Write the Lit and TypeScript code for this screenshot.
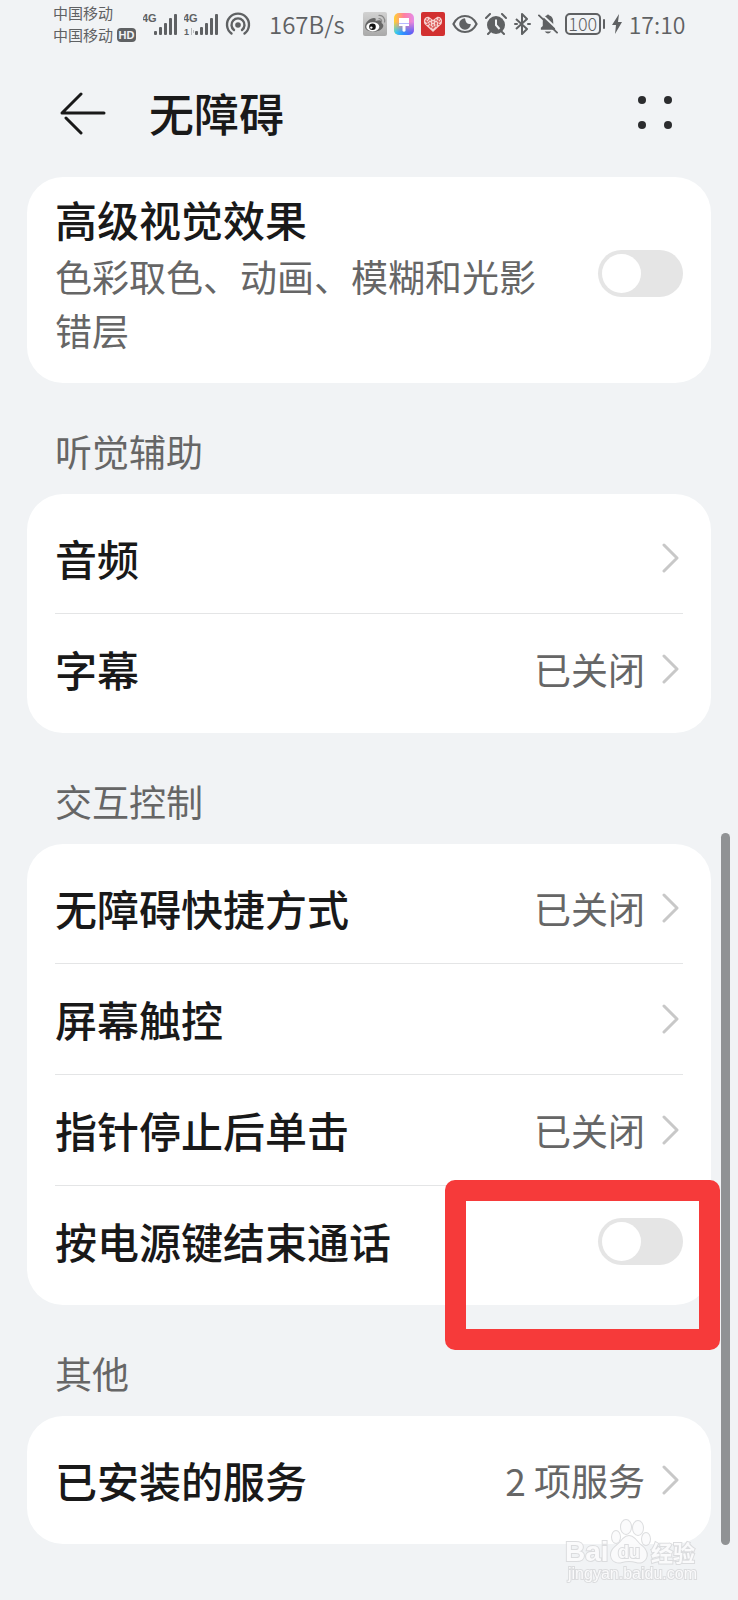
import { LitElement, html, css, svg, nothing } from "lit";
import { customElement, property } from "lit/decorators.js";

const fontStack = css`"Noto Sans CJK SC", "Noto Sans", sans-serif`;

@customElement("status-bar")
class StatusBar extends LitElement {
  static styles = css`
    :host {
      display: block;
      color: #5f6163;
      font-family: ${fontStack};
    }
    .bar {
      display: flex;
      align-items: center;
      gap: 7px;
      height: 48px;
      padding: 0 53px;
    }
    svg {
      display: block;
      flex: none;
    }
    .carriers {
      font-size: 15px;
      line-height: 22px;
      white-space: nowrap;
    }
    .line {
      display: flex;
      align-items: center;
      gap: 4px;
    }
    .hd {
      width: 19px;
      height: 14px;
      border-radius: 4px;
      background: #5f6163;
      color: #f1f3f5;
      font: 700 11px/14px "Liberation Sans", sans-serif;
      text-align: center;
    }
    .speed,
    .time {
      line-height: 32px;
      font-weight: 350;
      white-space: nowrap;
    }
    .speed {
      margin: 0 11px;
      font-size: 24px;
    }
    .time {
      font-size: 23px;
    }
    .battery {
      display: flex;
      align-items: center;
      gap: 2px;
    }
    .cell {
      box-sizing: border-box;
      width: 36px;
      height: 22px;
      border: 2px solid #5f6163;
      border-radius: 5px;
      font-size: 18px;
      line-height: 17px;
      font-weight: 300;
      text-align: center;
    }
    .cap {
      width: 2px;
      height: 10px;
      border-radius: 1px;
      background: #5f6163;
    }
    .net {
      font: 700 11px "Liberation Sans", sans-serif;
    }
    .slot {
      font: 700 9px "Liberation Sans", sans-serif;
    }
  `;

  private signal(slot: boolean) {
    return svg`<svg width="34" height="24" viewBox="0 0 34 24" fill="currentColor">
      <text class="net" x="-1" y="10">4G</text>
      ${slot ? svg`<text class="slot" x="0" y="23">1</text><path d="M7.500 16v7M9.500 18v3" stroke="#b9bbbd"/>` : nothing}
      <rect x="11" y="19" width="3" height="4" rx="1"/>
      <rect x="16" y="15" width="3" height="8" rx="1"/>
      <rect x="21" y="11" width="3" height="12" rx="1"/>
      <rect x="26" y="6" width="3" height="17" rx="1"/>
      <rect x="31" y="2" width="3" height="21" rx="1"/>
    </svg>`;
  }

  render() {
    return html`<div class="bar">
      <div class="carriers">
        <div class="line">中国移动</div>
        <div class="line">中国移动<span class="hd">HD</span></div>
      </div>
      ${this.signal(false)}${this.signal(true)}
      <svg width="26" height="24" viewBox="0 0 26 24" fill="none" stroke="currentColor" stroke-width="2.400" stroke-linecap="round">
        <circle cx="13" cy="13" r="2.800" fill="currentColor" stroke="none"/>
        <path d="M9 18a6.500 6.500 0 1 1 8 0M6.500 21.500a11 11 0 1 1 13 0"/>
      </svg>
      <span class="speed">167B/s</span>
      <svg width="24" height="24" viewBox="0 0 24 24">
        <defs><linearGradient id="g" x2="0" y2="1"><stop stop-color="#d2d2d2"/><stop offset="1" stop-color="#a9a9a9"/></linearGradient></defs>
        <rect width="24" height="24" rx="2" fill="url(#g)"/>
        <path d="M2 15c0-5 5-9 9-9 2 0 2 1 1.500 3 4-1.500 7-1 6 2 2 1 2.500 3 1 5-3 5-17 5-17.500-1z" fill="#666"/>
        <ellipse cx="9.800" cy="14.800" rx="6.500" ry="4.600" fill="#fff"/>
        <circle cx="9.500" cy="14.800" r="3.300" fill="#111"/><circle cx="8.300" cy="15.600" r="1.200" fill="#fff"/>
        <path d="M15.500 6.500c2.500 0 3.500 1.500 3 3.500M15.500 3.500c4.500-.5 7 3 6 7" fill="none" stroke="#888" stroke-width="1.200"/>
      </svg>
      <svg width="20" height="22" viewBox="0 0 20 22">
        <defs>
          <linearGradient id="a" x2="1"><stop stop-color="#ffd22e"/><stop offset=".5" stop-color="#ff7fa0"/><stop offset="1" stop-color="#e58be8"/></linearGradient>
          <linearGradient id="b" x2="1"><stop stop-color="#32d9f5"/><stop offset=".5" stop-color="#2f8bff"/><stop offset="1" stop-color="#6d55f2"/></linearGradient>
          <linearGradient id="m" x2="0" y2="1"><stop offset=".4" stop-color="#000"/><stop offset=".9" stop-color="#fff"/></linearGradient>
          <mask id="k"><rect width="20" height="22" fill="url(#m)"/></mask>
        </defs>
        <rect width="20" height="22" rx="5" fill="url(#a)"/>
        <rect width="20" height="22" rx="5" fill="url(#b)" mask="url(#k)"/>
        <path d="M5 5h10v8h-3.500v5q-1.500 1.500-3 0v-5H5z" fill="#fff"/><path d="M5 10.500h10" stroke="#b8b8ff"/>
      </svg>
      <svg width="24" height="24" viewBox="0 0 24 24">
        <rect width="24" height="24" rx="2" fill="#d23030"/>
        <path d="M12 20 3.500 12C1.500 7 5 4 8 5l4 3 4-3c3-1 6.500 2 4.500 7z" fill="#f6d0cd"/>
        <path d="M6 6v7M9 7v9M12 9v9M15 7v9M18 6v7M4 9h4M16 9h4M6 12h4M14 12h4M9 15h6" stroke="#d23030" stroke-width="1" stroke-dasharray="2 1"/>
      </svg>
      <svg width="26" height="20" viewBox="0 0 27 20" fill="none" stroke="currentColor" stroke-width="2.200">
        <path d="M1.500 10C7-1 20-1 25.500 10 20 21 7 21 1.500 10z"/>
        <path d="M13.500 4a6 6 0 1 0 6 6q-5 1-6-6z" fill="currentColor" stroke="none"/>
      </svg>
      <svg width="22" height="22" viewBox="0 0 22 22">
        <circle cx="11" cy="12" r="9" fill="currentColor"/>
        <path d="M11 6.500V12l3.500 4" stroke="#f1f3f5" stroke-width="2" fill="none"/>
        <path d="M1 5l4-4M21 5l-4-4M5 19l-2 2M17 19l2 2" stroke="currentColor" stroke-width="2" stroke-linecap="round"/>
      </svg>
      <svg width="17" height="22" viewBox="0 0 17 22" fill="none" stroke="currentColor" stroke-width="2" stroke-linejoin="round">
        <path d="M2 6l11 10-5 5V1l5 5L2 16"/><path d="M1 11h2M14 11h2" stroke-linecap="round"/>
      </svg>
      <svg width="20" height="22" viewBox="0 0 21 22">
        <path d="M3 17V15l2-2V9q0-6 4-7 1.500-2 3 0 4 1 4 7v4l2 2v2zM7 19h7q-3.500 4-7 0z" fill="currentColor"/>
        <path d="M3 0l19 18" stroke="#f1f3f5" stroke-width="2"/>
        <path d="M1 2l19 18" stroke="currentColor" stroke-width="2" stroke-linecap="round"/>
      </svg>
      <span class="battery"><span class="cell">100</span><span class="cap"></span></span>
      <svg width="10" height="20" viewBox="0 0 10 20" fill="currentColor"><path d="M7 0 0 11h4L3 20l7-12H6z"/></svg>
      <span class="time">17:10</span>
    </div>`;
  }
}

@customElement("setting-row")
class SettingRow extends LitElement {
  @property() label = "";
  @property() detail = "";
  @property() value = "";
  @property({ type: Boolean }) toggle = false;
  @property({ type: Boolean }) marked = false;

  static styles = css`
    :host {
      display: block;
      border-bottom: 1px solid #e4e5e6;
      font-family: ${fontStack};
    }
    :host(:last-of-type) {
      border-bottom-color: transparent;
    }
    .row {
      box-sizing: border-box;
      position: relative;
      display: flex;
      align-items: center;
      justify-content: space-between;
      gap: 48px;
      width: 100%;
      min-height: 110px;
      color: #191919;
      text-decoration: none;
    }
    .tall {
      padding: 3px 0 17px;
    }
    .label {
      display: block;
      font-size: 42px;
      line-height: 60px;
      font-weight: 500;
    }
    .detail {
      display: block;
      font-size: 37px;
      line-height: 54px;
      color: #666;
    }
    .end {
      display: flex;
      align-items: center;
      gap: 16px;
      padding-right: 4px;
      font-size: 37px;
      line-height: 54px;
      color: #666;
      white-space: nowrap;
    }
    .chevron {
      display: block;
      width: 18px;
      height: 32px;
    }
    .switch {
      appearance: none;
      flex: none;
      box-sizing: border-box;
      width: 85px;
      height: 47px;
      margin: 0;
      padding: 4px;
      border-radius: 24px;
      background: #e5e5e5;
    }
    .switch::before {
      content: "";
      display: block;
      width: 39px;
      height: 39px;
      border-radius: 50%;
      background: #fff;
    }
    .switch:checked {
      background: #0a59f7;
    }
    .switch:checked::before {
      margin-left: auto;
    }
    .mark {
      position: absolute;
      top: -6px;
      right: -37px;
      width: 275px;
      height: 170px;
      pointer-events: none;
    }
  `;

  render() {
    const text = html`<span>
      <span class="label">${this.label}</span>
      ${this.detail ? html`<span class="detail">${this.detail}</span>` : nothing}
    </span>`;
    if (this.toggle) {
      return html`<label class="row ${this.detail ? "tall" : ""}">
        ${text}<input class="switch" type="checkbox" role="switch" />
        ${this.marked
          ? html`<svg class="mark" viewBox="0 0 275 170" aria-hidden="true">
              <path fill="#f63a3a" fill-rule="evenodd" d="M10 0H265a10 10 0 0 1 10 10V160a10 10 0 0 1-10 10H10a10 10 0 0 1-10-10V10A10 10 0 0 1 10 0zM21 21V149H254V21z"/>
            </svg>`
          : nothing}
      </label>`;
    }
    return html`<a class="row" href="#">
      ${text}
      <span class="end">${this.value}
        <svg class="chevron" viewBox="0 0 18 32" fill="none" stroke="#c8c8c8" stroke-width="3" stroke-linecap="round" stroke-linejoin="round"><path d="M3 3l13 13L3 29"/></svg>
      </span>
    </a>`;
  }
}

@customElement("app-root")
class AppRoot extends LitElement {
  static styles = css`
    :host {
      display: block;
      position: relative;
      min-height: 100vh;
      overflow: hidden;
      background: #f1f3f5;
      font-family: ${fontStack};
    }
    .head {
      display: flex;
      align-items: center;
      height: 129px;
      box-sizing: border-box;
      padding: 0 64px 0 60px;
    }
    .icon {
      display: block;
      padding: 0;
      border: 0;
      background: none;
    }
    .icon svg {
      display: block;
    }
    .title {
      flex: 1;
      margin: 0 0 0 43px;
      font-size: 45px;
      line-height: 60px;
      font-weight: 500;
      color: #191919;
    }
    .list {
      padding: 0 27px 55px;
    }
    .card {
      padding: 9px 28px 8px;
      border-radius: 36px;
      background: #fff;
    }
    .section {
      margin: 0;
      padding: 41px 28px 16px;
      font-size: 37px;
      line-height: 54px;
      font-weight: 400;
      color: #666;
    }
    .scroll {
      position: absolute;
      top: 833px;
      right: 8px;
      bottom: 55px;
      width: 9px;
      border-radius: 5px;
      background: #909294;
    }
    .watermark {
      position: absolute;
      right: 38px;
      bottom: 12px;
      width: 136px;
      height: 72px;
      fill: #fbfbfc;
      stroke: #d9dadc;
      stroke-width: 2px;
      paint-order: stroke;
      opacity: 0.9;
    }
    .brand {
      font: 700 28px "Liberation Sans", sans-serif;
    }
    .du {
      font: 700 18px "Liberation Sans", sans-serif;
    }
    .cn {
      font: 700 22px ${fontStack};
    }
    .url {
      font: 400 16px "Liberation Sans", sans-serif;
    }
  `;

  render() {
    return html`
      <status-bar></status-bar>
      <header class="head">
        <button class="icon" aria-label="返回">
          <svg width="46" height="44" viewBox="0 0 46 44" fill="none" stroke="#191919" stroke-width="3" stroke-linecap="round" stroke-linejoin="round"><path d="M44 22H2L21 3M6 27l15 15"/></svg>
        </button>
        <h1 class="title">无障碍</h1>
        <button class="icon" aria-label="更多">
          <svg width="38" height="36" viewBox="0 0 38 36" fill="#2b2c2e"><circle cx="6" cy="5" r="4"/><circle cx="32" cy="5" r="4"/><circle cx="6" cy="30" r="4"/><circle cx="32" cy="30" r="4"/></svg>
        </button>
      </header>
      <main class="list">
        <section class="card">
          <setting-row label="高级视觉效果" detail="色彩取色、动画、模糊和光影错层" toggle></setting-row>
        </section>
        <h2 class="section">听觉辅助</h2>
        <section class="card">
          <setting-row label="音频"></setting-row>
          <setting-row label="字幕" value="已关闭"></setting-row>
        </section>
        <h2 class="section">交互控制</h2>
        <section class="card">
          <setting-row label="无障碍快捷方式" value="已关闭"></setting-row>
          <setting-row label="屏幕触控"></setting-row>
          <setting-row label="指针停止后单击" value="已关闭"></setting-row>
          <setting-row label="按电源键结束通话" toggle marked></setting-row>
        </section>
        <h2 class="section">其他</h2>
        <section class="card">
          <setting-row label="已安装的服务" value="2 项服务"></setting-row>
        </section>
      </main>
      <div class="scroll"></div>
      <svg class="watermark" viewBox="0 0 136 72">
        <text class="brand" x="1" y="45">Bai</text>
        <path d="M51 31q5-4 8-8 6-6 12 0 4 5 8 8c8 8 2 18-7 15q-7-2-14 0c-10 3-15-8-7-15z"/>
        <ellipse cx="52" cy="21" rx="4" ry="6"/><ellipse cx="62" cy="11" rx="5" ry="7"/><ellipse cx="74" cy="12" rx="5" ry="7"/><ellipse cx="82" cy="23" rx="4" ry="6"/>
        <text class="du" x="54" y="42">du</text>
        <text class="cn" x="87" y="45">经验</text>
        <text class="url" x="4" y="63">jingyan.baidu.com</text>
      </svg>
    `;
  }
}
